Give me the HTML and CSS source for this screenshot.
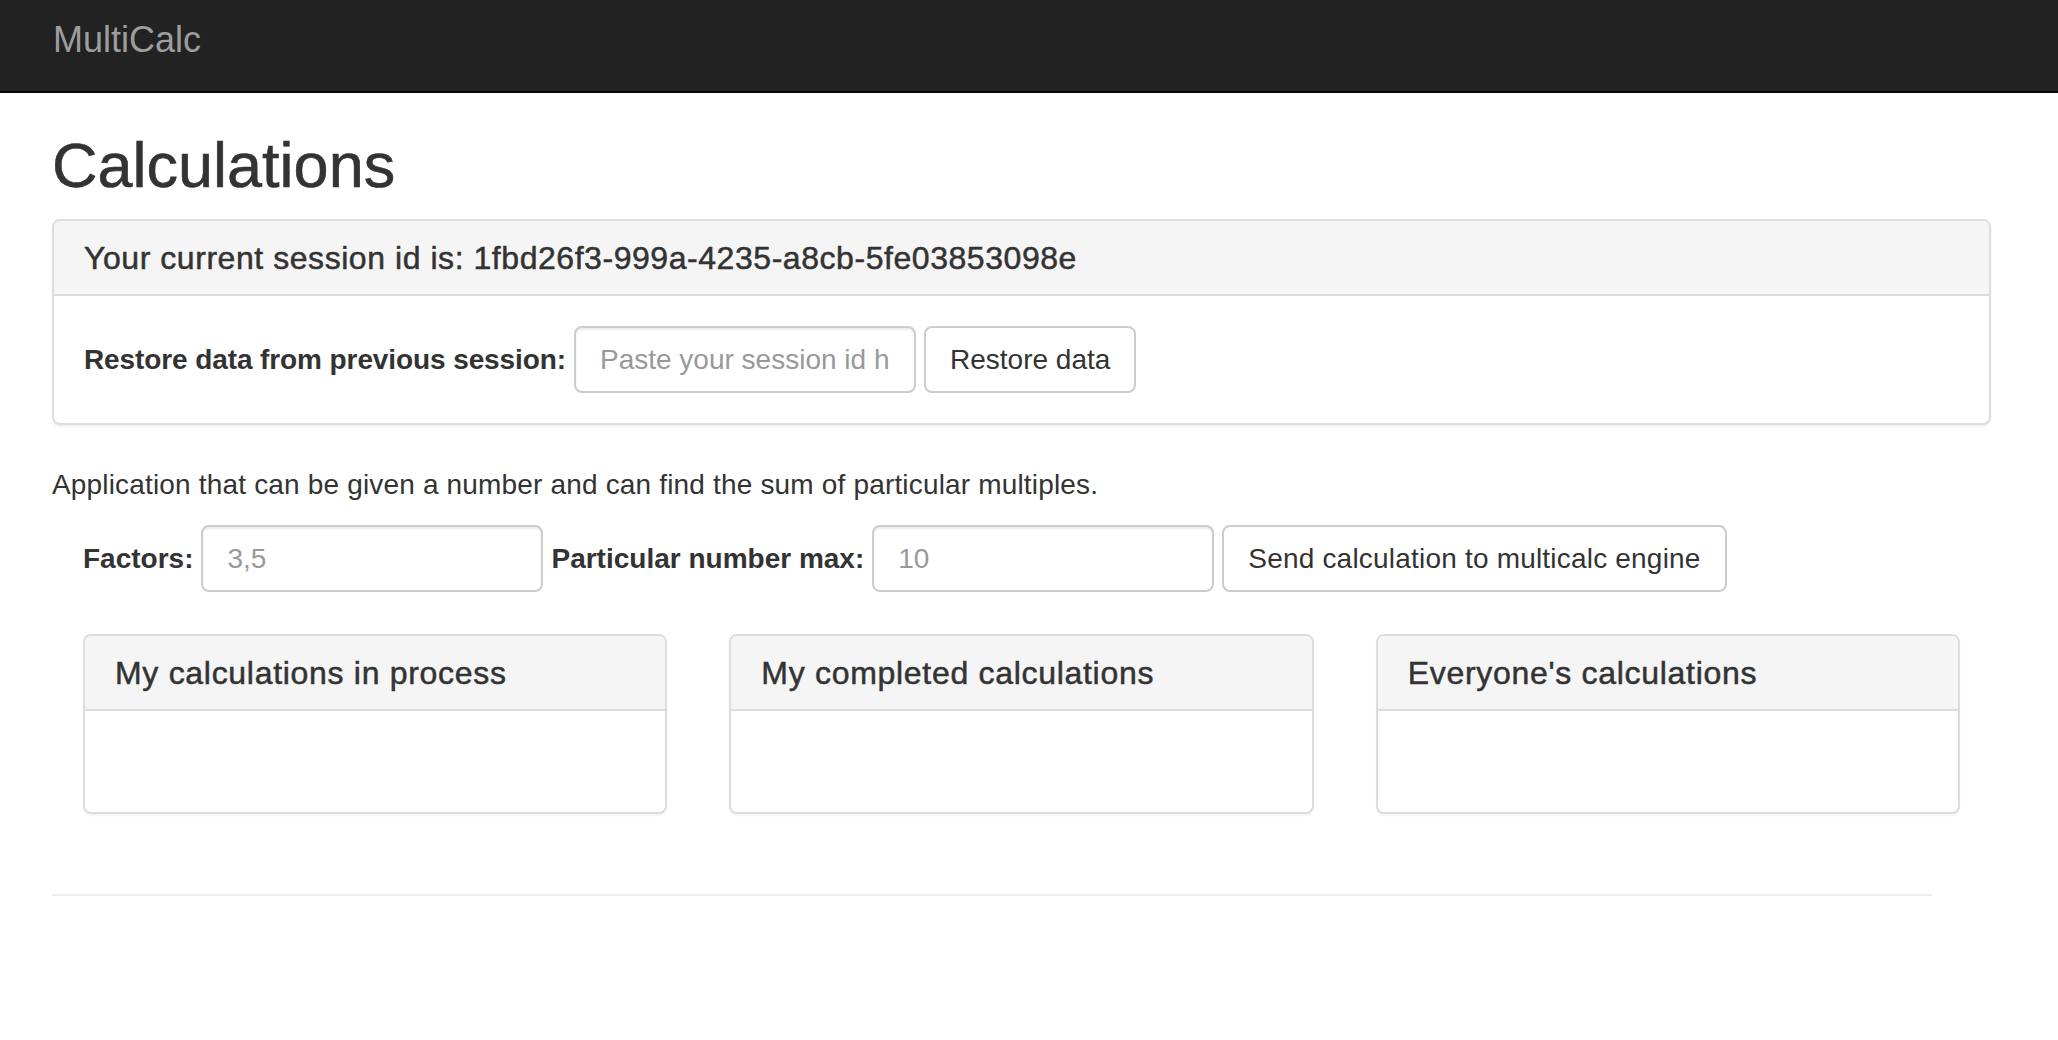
FILE: index.html
```html
<!DOCTYPE html>
<html lang="en">
<head>
<meta charset="utf-8">
<title>MultiCalc</title>
<link rel="stylesheet" href="styles.css">
</head>
<body>
<nav class="navbar">
  <a class="brand" href="#">MultiCalc</a>
</nav>
<main class="container">
  <h1 class="page-title">Calculations</h1>
  <section class="panel">
    <div class="panel-heading">
      <h3 class="panel-title">Your current session id is: 1fbd26f3-999a-4235-a8cb-5fe03853098e</h3>
    </div>
    <div class="panel-body">
      <form class="inline-form">
        <label class="field-label tight" for="session">Restore data from previous session:</label>
        <input class="form-control" id="session" type="text" placeholder="Paste your session id here">
        <button class="btn" type="button">Restore data</button>
      </form>
    </div>
  </section>
  <p class="lead-text">Application that can be given a number and can find the sum of particular multiples.</p>
  <form class="inline-form calc-form">
    <label class="field-label" for="factors">Factors:</label>
    <input class="form-control" id="factors" type="text" placeholder="3,5">
    <label class="field-label" for="max">Particular number max:</label>
    <input class="form-control" id="max" type="text" placeholder="10">
    <button class="btn btn-send" type="button">Send calculation to multicalc engine</button>
  </form>
  <div class="columns">
    <section class="panel col-panel">
      <div class="panel-heading"><h3 class="panel-title">My calculations in process</h3></div>
      <div class="panel-body empty"></div>
    </section>
    <section class="panel col-panel">
      <div class="panel-heading"><h3 class="panel-title">My completed calculations</h3></div>
      <div class="panel-body empty"></div>
    </section>
    <section class="panel col-panel">
      <div class="panel-heading"><h3 class="panel-title">Everyone's calculations</h3></div>
      <div class="panel-body empty"></div>
    </section>
  </div>
  <hr class="divider">
</main>
</body>
</html>
```

FILE: styles.css
```css
* { box-sizing: border-box; }
html, body { margin: 0; padding: 0; background: #fff; }
body {
  font-family: "Liberation Sans", Arial, Helvetica, sans-serif;
  font-size: 28px;
  line-height: 40px;
  color: #333;
}
.navbar {
  height: 93px;
  background: #222;
  border-bottom: 2px solid #080808;
  padding: 20px 0 0 53px;
}
.brand {
  display: block;
  font-size: 36px;
  line-height: 40px;
  color: #9d9d9d;
  text-decoration: none;
}
.container {
  margin: 0 67px 0 52px;
}
.page-title {
  margin: 37px 0 19px;
  font-size: 63px;
  line-height: 70px;
  font-weight: 500;
  color: #333;
  -webkit-text-stroke: 0.6px #333;
}
.panel {
  background: #fff;
  border: 2px solid #ddd;
  border-radius: 8px;
  box-shadow: 0 2px 2px rgba(0,0,0,0.05);
  margin-bottom: 40px;
}
.panel-heading {
  background: #f5f5f5;
  border-bottom: 2px solid #ddd;
  border-radius: 6px 6px 0 0;
  padding: 20px 30px 18px;
}
.panel-title {
  margin: 0;
  font-size: 32px;
  line-height: 35px;
  font-weight: 500;
  letter-spacing: 0.55px;
  color: #333;
  -webkit-text-stroke: 0.5px #333;
}
.col-panel .panel-title {
  letter-spacing: 0.7px;
}
.panel-body {
  padding: 30px;
}
.panel-body.empty {
  height: 101px;
}
.inline-form {
  display: flex;
  align-items: center;
  gap: 8px;
  margin: 0;
}
.field-label {
  font-weight: bold;
}
.field-label.tight {
  letter-spacing: -0.1px;
}
.form-control {
  width: 342px;
  height: 67px;
  padding: 12px 24px;
  font-family: inherit;
  font-size: 28px;
  color: #555;
  background: #fff;
  border: 2px solid #ccc;
  border-radius: 8px;
  box-shadow: inset 0 2px 2px rgba(0,0,0,0.075);
  outline: none;
}
.form-control::placeholder { color: #999; }
.btn {
  height: 67px;
  padding: 0 24px;
  font-family: inherit;
  font-size: 28px;
  color: #333;
  background: #fff;
  border: 2px solid #ccc;
  border-radius: 8px;
  cursor: pointer;
}
.btn-send {
  letter-spacing: 0.2px;
}
.lead-text {
  margin: 0 0 20px;
  letter-spacing: 0.17px;
}
.calc-form {
  padding-left: 31px;
  margin-bottom: 42px;
}
.columns {
  display: grid;
  grid-template-columns: repeat(3, 1fr);
  gap: 62px;
  padding: 0 31px;
}
.divider {
  width: 1880px;
  margin: 40px 0 0;
  border: 0;
  border-top: 2px solid #eee;
}
```
